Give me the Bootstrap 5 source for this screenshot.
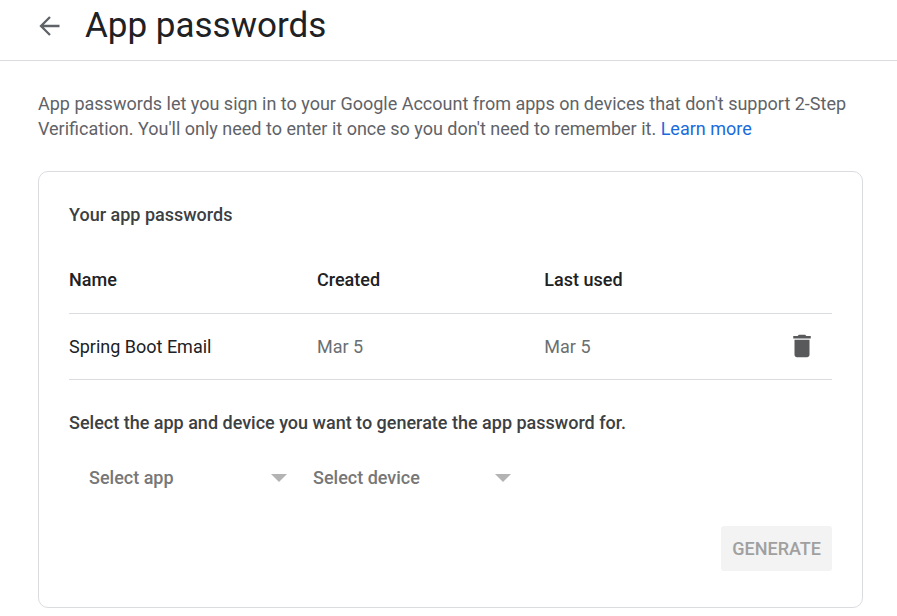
<!DOCTYPE html>
<html lang="en">
<head>
<meta charset="utf-8">
<meta name="viewport" content="width=device-width, initial-scale=1">
<title>App passwords</title>
<link href="https://cdn.jsdelivr.net/npm/bootstrap@5.3.0/dist/css/bootstrap.min.css" rel="stylesheet">
<style>
  body { font: 400 18px/25px Roboto, sans-serif; color: #5f6368; }
  .top-bar { height: 61px; padding: 0 38px 8px; gap: 24px; border-bottom: 1px solid #dadce0; }
  .page-title { font-size: 35px; line-height: 44px; font-weight: 400; color: #202124; }
  .icon-btn { color: #5f6368; line-height: 0; }
  .page-body { padding: 30px 34px 8px 38px; }
  .intro { margin-bottom: 30px; }
  .intro a { color: #1a6bdc; }
  .pw-card { border: 1px solid #dadce0; border-radius: 10px; padding: 30px 30px 36px; }
  .section-title { font-size: 18px; line-height: 25px; font-weight: 500; color: #3c4043; }
  .pw-table { table-layout: fixed; margin: 20px 0 30px; --bs-table-bg: transparent; }
  .pw-table th, .pw-table td { padding: 20px 0; line-height: 25px; border-bottom: 1px solid #dadce0; vertical-align: middle; }
  .pw-table thead th { font-weight: 500; color: #202124; padding-bottom: 21px; }
  .pw-table tbody th { font-weight: 400; color: #202124; }
  .pw-table tbody td { color: #6b6f73; }
  .pw-table .col-name { width: 32.5%; }
  .pw-table .col-date { width: 29.8%; }
  .pw-table td.actions { padding: 0 15px 2px 0; }
  .choices { margin: 20px 0 26px; }
  .choice {
    width: 224px; height: 45px; padding: 0 36px 0 20px; border: 0;
    font-size: 18px; line-height: 25px; font-weight: 500; color: #777;
    background: transparent url("data:image/svg+xml,%3Csvg xmlns='http://www.w3.org/2000/svg' viewBox='0 0 16 8'%3E%3Cpath d='M0 0h16L8 8z' fill='%23b3b3b3'/%3E%3C/svg%3E") no-repeat right 6px center / 16px 8px;
  }
  .generate { height: 45px; padding: 0 11px; border-radius: 3px; font-size: 18px; line-height: 25px; font-weight: 500; }
  .generate:disabled { background: #f3f3f3; color: #a0a0a0; border: 0; opacity: 1; }
</style>
</head>
<body class="bg-white">
<header class="top-bar d-flex align-items-center">
  <button type="button" class="icon-btn btn p-0 border-0" aria-label="Back">
    <svg width="23" height="22" viewBox="0 0 23 22" fill="none" stroke="currentColor" stroke-width="2.300" aria-hidden="true"><path d="M21.500 11H3M12 2L3 11L12 20"/></svg>
  </button>
  <h1 class="page-title m-0">App passwords</h1>
</header>
<main class="page-body">
  <p class="intro">App passwords let you sign in to your Google Account from apps on devices that don't support 2-Step Verification. You'll only need to enter it once so you don't need to remember it. <a href="#" class="text-decoration-none">Learn more</a></p>
  <section class="pw-card">
    <h2 class="section-title m-0">Your app passwords</h2>
    <table class="table pw-table">
      <thead>
        <tr>
          <th scope="col" class="col-name">Name</th>
          <th scope="col" class="col-date">Created</th>
          <th scope="col" class="col-date">Last used</th>
          <th scope="col" aria-label="Actions"></th>
        </tr>
      </thead>
      <tbody>
        <tr>
          <th scope="row">Spring Boot Email</th>
          <td>Mar 5</td>
          <td>Mar 5</td>
          <td class="actions text-end">
            <button type="button" class="icon-btn btn p-0 border-0" aria-label="Delete Spring Boot Email">
              <svg width="30" height="30" viewBox="0 0 24 24" fill="#58595b" aria-hidden="true"><path d="M6 19c0 1.100.900 2 2 2h8c1.100 0 2-.900 2-2V7H6v12zM19 4h-3.500l-1-1h-5l-1 1H5v2h14V4z"/></svg>
            </button>
          </td>
        </tr>
      </tbody>
    </table>
    <h2 class="section-title m-0">Select the app and device you want to generate the app password for.</h2>
    <form>
      <div class="choices d-flex flex-wrap">
        <select class="choice form-select" aria-label="App"><option>Select app</option></select>
        <select class="choice form-select" aria-label="Device"><option>Select device</option></select>
      </div>
      <div class="d-flex justify-content-end">
        <button type="submit" class="generate btn" disabled>GENERATE</button>
      </div>
    </form>
  </section>
</main>
<script src="https://cdn.jsdelivr.net/npm/bootstrap@5.3.0/dist/js/bootstrap.bundle.min.js"></script>
</body>
</html>
